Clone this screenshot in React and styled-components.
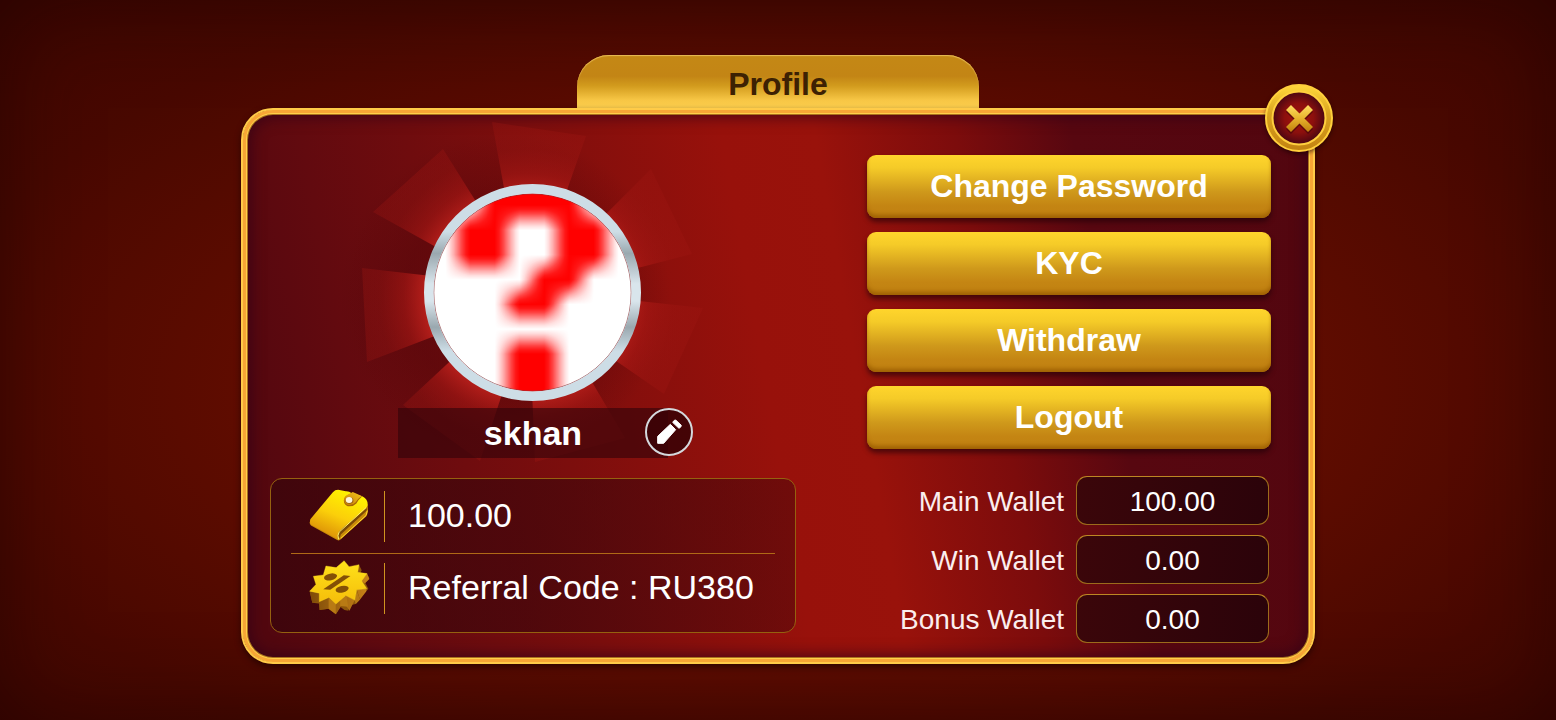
import React from "react";
import styled, { createGlobalStyle } from "styled-components";

const GlobalStyle = createGlobalStyle`
  *, *::before, *::after { box-sizing: border-box; }
  body {
    margin: 0;
    font-family: "Liberation Sans", Arial, sans-serif;
    color: #fff;
    background: #3a0500;
  }
  button { font: inherit; color: inherit; border: 0; padding: 0; cursor: pointer; }
`;

const Page = styled.main`
  min-height: 100vh;
  padding: 24px 24px 25px;
  display: flex;
  flex-direction: column;
  align-items: center;
  justify-content: center;
  background: radial-gradient(ellipse 70% 74% at 50% 54%, #640d00 0%, #600c00 48%, #480800 78%, #3e0600 100%);
  box-shadow: inset 0 0 90px rgba(24, 2, 0, 0.5);
`;

const TitleTab = styled.h1`
  margin: 0;
  width: 402px;
  max-width: 80%;
  height: 53px;
  padding-top: 4px;
  display: flex;
  align-items: center;
  justify-content: center;
  border-radius: 32px 32px 0 0;
  font-size: 32px;
  line-height: 36px;
  color: #3d2103;
  background: linear-gradient(#c48815 0%, #c38515 40%, #d29b1d 58%, #f7c645 85%, #fdcf4e 100%);
  box-shadow: inset 0 1px 1px #e9bd57;
`;

const Panel = styled.section`
  position: relative;
  width: 100%;
  max-width: 1074px;
  padding: 45px 42px 19px 27px;
  border: 2px solid #ffcb48;
  border-radius: 32px;
  display: grid;
  grid-template-columns: 526fr 404fr;
  column-gap: 71px;
  background: linear-gradient(80deg, #52070f 3%, #620a0f 13%, #7c0e0d 31%, #98110b 49%, #99120b 57%, #7c0c0c 69%, #570710 79%, #52060f 100%);
  box-shadow:
    inset 0 0 0 3px #f7a636,
    inset 0 0 0 4px #ffd04a,
    inset 0 0 0 5px #a9701d,
    inset 0 0 16px 6px rgba(48, 3, 24, 0.8),
    0 3px 6px rgba(20, 0, 0, 0.6);
`;

const CloseButton = styled.button`
  position: absolute;
  top: -26px;
  right: -20px;
  width: 68px;
  height: 68px;
  border-radius: 50%;
  background: none;
  box-shadow: 0 2px 4px rgba(20, 0, 0, 0.6);
  svg { display: block; }
`;

const ProfileColumn = styled.div`
  padding-top: 29px;
  display: flex;
  flex-direction: column;
  align-items: center;
`;

const AvatarArt = styled.svg`
  display: block;
  width: 218px;
  height: 217px;
  overflow: visible;
`;

const NamePlate = styled.div`
  position: relative;
  margin-top: 7px;
  width: 270px;
  height: 50px;
  display: flex;
  align-items: center;
  justify-content: center;
  background: rgba(50, 4, 10, 0.62);
`;

const UserName = styled.h2`
  margin: 0;
  font-size: 34px;
  line-height: 40px;
`;

const EditButton = styled.button`
  position: absolute;
  top: 0;
  right: -25px;
  width: 48px;
  height: 48px;
  border-radius: 50%;
  background: none;
  svg { display: block; }
`;

const InfoCard = styled.div`
  margin-top: 20px;
  width: 100%;
  height: 155px;
  padding: 0 20px;
  border: 1px solid #95610f;
  border-radius: 12px;
  background: linear-gradient(100deg, rgba(50, 4, 10, 0.6), rgba(50, 4, 10, 0.55) 50%, rgba(50, 4, 10, 0.38));
`;

const InfoRow = styled.div`
  height: 74px;
  padding: 0 0 0 16px;
  display: flex;
  align-items: center;
  & + & { height: 70px; border-top: 1px solid #b06a16; }
`;

const InfoIcon = styled.svg`
  flex: none;
  width: 63px;
  height: 57px;
`;

const InfoText = styled.p`
  margin: 0 0 0 14px;
  padding-left: 23px;
  height: 51px;
  border-left: 1px solid #cf9420;
  font-size: 34px;
  line-height: 48px;
  white-space: nowrap;
`;

const ActionColumn = styled.div`
  display: flex;
  flex-direction: column;
  gap: 27px;
`;

const ActionList = styled.nav`
  display: grid;
  gap: 14px;
`;

const ActionButton = styled.button`
  height: 63px;
  padding-bottom: 2px;
  border-radius: 9px;
  font-size: 32px;
  font-weight: 700;
  line-height: 36px;
  background: linear-gradient(#ffd52c 0%, #f5cb28 20%, #cf991b 58%, #c48513 80%, #c08011 100%);
  box-shadow: inset 0 -4px 4px -1px #9e6003, 0 4px 5px rgba(30, 0, 8, 0.6);
`;

const WalletList = styled.div`
  padding-right: 2px;
  display: grid;
  gap: 10px;
`;

const WalletRow = styled.div`
  display: flex;
  align-items: center;
  justify-content: flex-end;
  gap: 12px;
  font-size: 28px;
  line-height: 32px;
`;

const WalletLabel = styled.label`
  padding-top: 2px;
  color: #fbeeee;
`;

const WalletValue = styled.output`
  width: 193px;
  height: 49px;
  padding-top: 2px;
  display: flex;
  align-items: center;
  justify-content: center;
  border: 1px solid #9c6b1b;
  border-top-color: #bd8723;
  border-radius: 11px;
  background: linear-gradient(95deg, #3b060a, #2b030a);
`;

const RAYS = [
  "492,122 586,136 560,210 508,210",
  "443,149 373,212 445,252 480,208",
  "651,169 692,254 630,270 600,220",
  "362,268 367,362 440,334 440,277",
  "703,308 664,394 606,354 630,300",
  "460,352 403,405 480,461 505,385",
  "532,390 535,462 625,438 585,370",
];

// The 8 by 8 placeholder picture; each entry is x, y, width, height in texels.
const MARK = [
  [2, -2, 4, 3], [1, 1, 2, 2], [5, 1, 2, 2], [4, 3, 2, 1], [3, 4, 2, 1], [3, 6, 2, 4],
];
const TEXEL = 198 / 8;
const SPREAD = 25;
const BOX = Array(SPREAD).fill(1).join(" ");

function Avatar() {
  return (
    <AvatarArt viewBox="424 184 218 217" role="img" aria-label="Avatar">
      <defs>
        <radialGradient id="rayFill" gradientUnits="userSpaceOnUse" cx="526" cy="296" r="175">
          <stop offset="0.55" stopColor="#cc2620" stopOpacity="0.85" />
          <stop offset="0.7" stopColor="#b41a16" stopOpacity="0.52" />
          <stop offset="0.84" stopColor="#a41713" stopOpacity="0.34" />
          <stop offset="1" stopColor="#a01612" stopOpacity="0.28" />
        </radialGradient>
        <radialGradient id="shade" gradientUnits="userSpaceOnUse" cx="505" cy="296" r="165">
          <stop offset="0.6" stopColor="#4a0408" stopOpacity="0.34" />
          <stop offset="1" stopColor="#4a0408" stopOpacity="0" />
        </radialGradient>
        <linearGradient id="ring" x1="0" y1="0" x2="0" y2="1">
          <stop offset="0.22" stopColor="#cddde6" />
          <stop offset="0.32" stopColor="#9aa8af" />
          <stop offset="0.46" stopColor="#d9e5ec" />
          <stop offset="0.54" stopColor="#d9e5ec" />
          <stop offset="0.66" stopColor="#9aa8af" />
          <stop offset="0.77" stopColor="#cddde6" />
        </linearGradient>
        <filter id="smooth" filterUnits="userSpaceOnUse" x="400" y="160" width="265" height="265" colorInterpolationFilters="sRGB">
          <feConvolveMatrix order={`${SPREAD} 1`} kernelMatrix={BOX} divisor={SPREAD} edgeMode="none" />
          <feConvolveMatrix order={`1 ${SPREAD}`} kernelMatrix={BOX} divisor={SPREAD} edgeMode="none" />
          <feComponentTransfer>
            <feFuncA type="table" tableValues="0 0.13 0.31 0.52 0.74 0.91 1" />
          </feComponentTransfer>
        </filter>
        <clipPath id="face"><circle cx="532.5" cy="292.5" r="99" /></clipPath>
      </defs>
      <circle cx="505" cy="296" r="165" fill="url(#shade)" />
      {RAYS.map((points) => <polygon key={points} points={points} fill="url(#rayFill)" />)}
      <circle cx="532.5" cy="292.5" r="100" fill="#fff" />
      <g clipPath="url(#face)">
        <g filter="url(#smooth)">
          {MARK.map(([x, y, w, h]) => (
            <rect
              key={`${x},${y}`}
              x={433 + x * TEXEL}
              y={193 + y * TEXEL}
              width={w * TEXEL}
              height={h * TEXEL}
              fill="#f00"
            />
          ))}
        </g>
      </g>
      <circle cx="532.5" cy="292.5" r="98.7" fill="none" stroke="#8b3a3e" strokeOpacity="0.7" strokeWidth="1" />
      <path
        fill="url(#ring)"
        fillRule="evenodd"
        d="M532.500 184a108.500 108.500 0 1 0 0 217a108.500 108.500 0 1 0 0-217zm0 9.500a99 99 0 1 1 0 198a99 99 0 1 1 0-198z"
      />
    </AvatarArt>
  );
}

function CloseIcon() {
  return (
    <svg width="68" height="68" viewBox="0 0 68 68" aria-hidden="true">
      <defs>
        <linearGradient id="rim" x1="0" y1="0" x2="0" y2="1">
          <stop offset="0" stopColor="#ffd83c" />
          <stop offset="0.45" stopColor="#d9a21f" />
          <stop offset="1" stopColor="#c28211" />
        </linearGradient>
        <radialGradient id="well">
          <stop offset="0" stopColor="#a3140d" />
          <stop offset="0.55" stopColor="#8c100d" />
          <stop offset="1" stopColor="#4a0612" />
        </radialGradient>
        <linearGradient id="cross" gradientUnits="userSpaceOnUse" x1="0" y1="21" x2="0" y2="47">
          <stop offset="0" stopColor="#ffde62" />
          <stop offset="0.5" stopColor="#e8b42e" />
          <stop offset="1" stopColor="#c2830f" />
        </linearGradient>
      </defs>
      <circle cx="34" cy="34" r="33" fill="url(#rim)" stroke="#ffd03c" strokeWidth="2" />
      <circle cx="34" cy="34" r="26.500" fill="url(#well)" stroke="#ffcf3e" strokeWidth="2" />
      <path d="M23.500 23.500L45.500 45.500M45.500 23.500L23.500 45.500" transform="translate(0 2)" stroke="#3c0408" strokeOpacity="0.6" strokeWidth="7" />
      <path d="M23.500 23.500L45.500 45.500M45.500 23.500L23.500 45.500" stroke="url(#cross)" strokeWidth="7" />
    </svg>
  );
}

function PencilIcon() {
  return (
    <svg width="48" height="48" viewBox="30 24 144 144" aria-hidden="true">
      <circle cx="102" cy="96" r="69" fill="#3a0206" fillOpacity="0.88" stroke="#d4d9dd" strokeWidth="6" />
      <path
        fill="#fff"
        stroke="#fff"
        strokeWidth="3"
        strokeLinejoin="round"
        d="M68 130V109L106 73L122 89L86 130zM113 67L118 61Q120 59 123 61L138 75Q140 78 138 80L132 85z"
      />
    </svg>
  );
}

function WalletIcon() {
  return (
    <InfoIcon viewBox="50 25 190 172" aria-hidden="true">
      <defs>
        <linearGradient id="leather" x1="0.75" y1="0.1" x2="0.3" y2="1">
          <stop offset="0" stopColor="#fff200" />
          <stop offset="0.5" stopColor="#fbcf0a" />
          <stop offset="1" stopColor="#d98a07" />
        </linearGradient>
        <linearGradient id="strap" x1="0" y1="1" x2="1" y2="0">
          <stop offset="0" stopColor="#c47b06" />
          <stop offset="1" stopColor="#f7c81a" />
        </linearGradient>
      </defs>
      <path fill="#c98a08" d="M58 127Q57 134 62 138L141 182Q147 185 152 180L229 110Q233 105 234 94L233 74L150 160z" />
      <path fill="#7b4a05" d="M147 158L231 85L230 94L152 165L149 176L143 172z" />
      <path fill="none" stroke="#ffd92e" strokeWidth="3" d="M152 177L228 108L232 93" />
      <path fill="url(#leather)" d="M60 119L128 38Q136 29 148 31L167 35Q176 34 185 41L218 51Q234 60 233 76Q232 83 225 87L147 156Q141 162 142 179L62 135Q57 129 60 119z" />
      <path fill="none" stroke="#fff36a" strokeWidth="3" d="M228 84L147 158Q141 166 145 180" />
      <path fill="#a96605" d="M161 62Q163 51 172 47L188 39L216 51L205 62L199 72Q190 82 173 80Q161 75 161 62z" />
      <path fill="url(#strap)" d="M162 58Q163 49 173 45L188 37L215 49L204 58L197 68Q188 78 173 76Q162 71 162 58z" />
      <ellipse cx="178" cy="63" rx="12" ry="10" fill="#9f6511" />
      <ellipse cx="177" cy="61" rx="10" ry="9" fill="#fff6dc" />
    </InfoIcon>
  );
}

function PercentIcon() {
  return (
    <InfoIcon viewBox="50 237 190 172" aria-hidden="true">
      <defs>
        <linearGradient id="badge" x1="0" y1="0" x2="0" y2="1">
          <stop offset="0" stopColor="#ffe21a" />
          <stop offset="1" stopColor="#f5bd0a" />
        </linearGradient>
        <linearGradient id="side" x1="0" y1="0" x2="1" y2="0">
          <stop offset="0" stopColor="#7e4a08" />
          <stop offset="1" stopColor="#c98418" />
        </linearGradient>
      </defs>
      <path fill="#8e560a" d="M207 252L215 268L211 276L231 278L238 292L226 306L235 324L228 333L208 334L210 356L197 370L176 374L175 390L163 388L150 378L137 401L115 384L88 388L86 368L66 366L58 331L76 312L150 300z" />
      <path fill="url(#side)" d="M58 331L86 338V364L66 366zM87 363L115 351V384L88 388zM137 370L152 352L152 378L137 401zM168 345L194 358L178 390L166 372zM200 326L230 323L228 333L210 356zM214 300L231 278L238 294L224 308z" />
      <path fill="#b87a14" d="M115 351L137 370V401L115 384zM150 348L169 345L174 378L150 376zM194 358L200 330L210 356L197 370z" />
      <path fill="url(#badge)" stroke="#ffdf26" strokeWidth="1" d="M162 239L177 257L207 251L203 274L231 278L215 300L230 323L200 327L194 358L167 344L137 370L116 350L87 363L87 337L58 331L77 311L69 286L99 282L107 255L138 260z" />
      <g fill="#835006">
        <ellipse cx="121" cy="288" rx="20" ry="10" transform="rotate(-12 121 288)" />
        <ellipse cx="156" cy="325" rx="20" ry="10" transform="rotate(-12 156 325)" />
        <path d="M161 283L181 285L120 327L99 325z" />
      </g>
    </InfoIcon>
  );
}

const ACTIONS = ["Change Password", "KYC", "Withdraw", "Logout"];

const WALLETS = [
  { id: "main-wallet", label: "Main Wallet", value: "100.00" },
  { id: "win-wallet", label: "Win Wallet", value: "0.00" },
  { id: "bonus-wallet", label: "Bonus Wallet", value: "0.00" },
];

export default function App() {
  return (
    <>
      <GlobalStyle />
      <Page>
        <TitleTab>Profile</TitleTab>
        <Panel>
          <ProfileColumn>
            <Avatar />
            <NamePlate>
              <UserName>skhan</UserName>
              <EditButton type="button" aria-label="Edit name"><PencilIcon /></EditButton>
            </NamePlate>
            <InfoCard>
              <InfoRow>
                <WalletIcon />
                <InfoText>100.00</InfoText>
              </InfoRow>
              <InfoRow>
                <PercentIcon />
                <InfoText>Referral Code : RU380</InfoText>
              </InfoRow>
            </InfoCard>
          </ProfileColumn>
          <ActionColumn>
            <ActionList>
              {ACTIONS.map((name) => <ActionButton key={name} type="button">{name}</ActionButton>)}
            </ActionList>
            <WalletList>
              {WALLETS.map(({ id, label, value }) => (
                <WalletRow key={id}>
                  <WalletLabel htmlFor={id}>{label}</WalletLabel>
                  <WalletValue id={id}>{value}</WalletValue>
                </WalletRow>
              ))}
            </WalletList>
          </ActionColumn>
          <CloseButton type="button" aria-label="Close"><CloseIcon /></CloseButton>
        </Panel>
      </Page>
    </>
  );
}
